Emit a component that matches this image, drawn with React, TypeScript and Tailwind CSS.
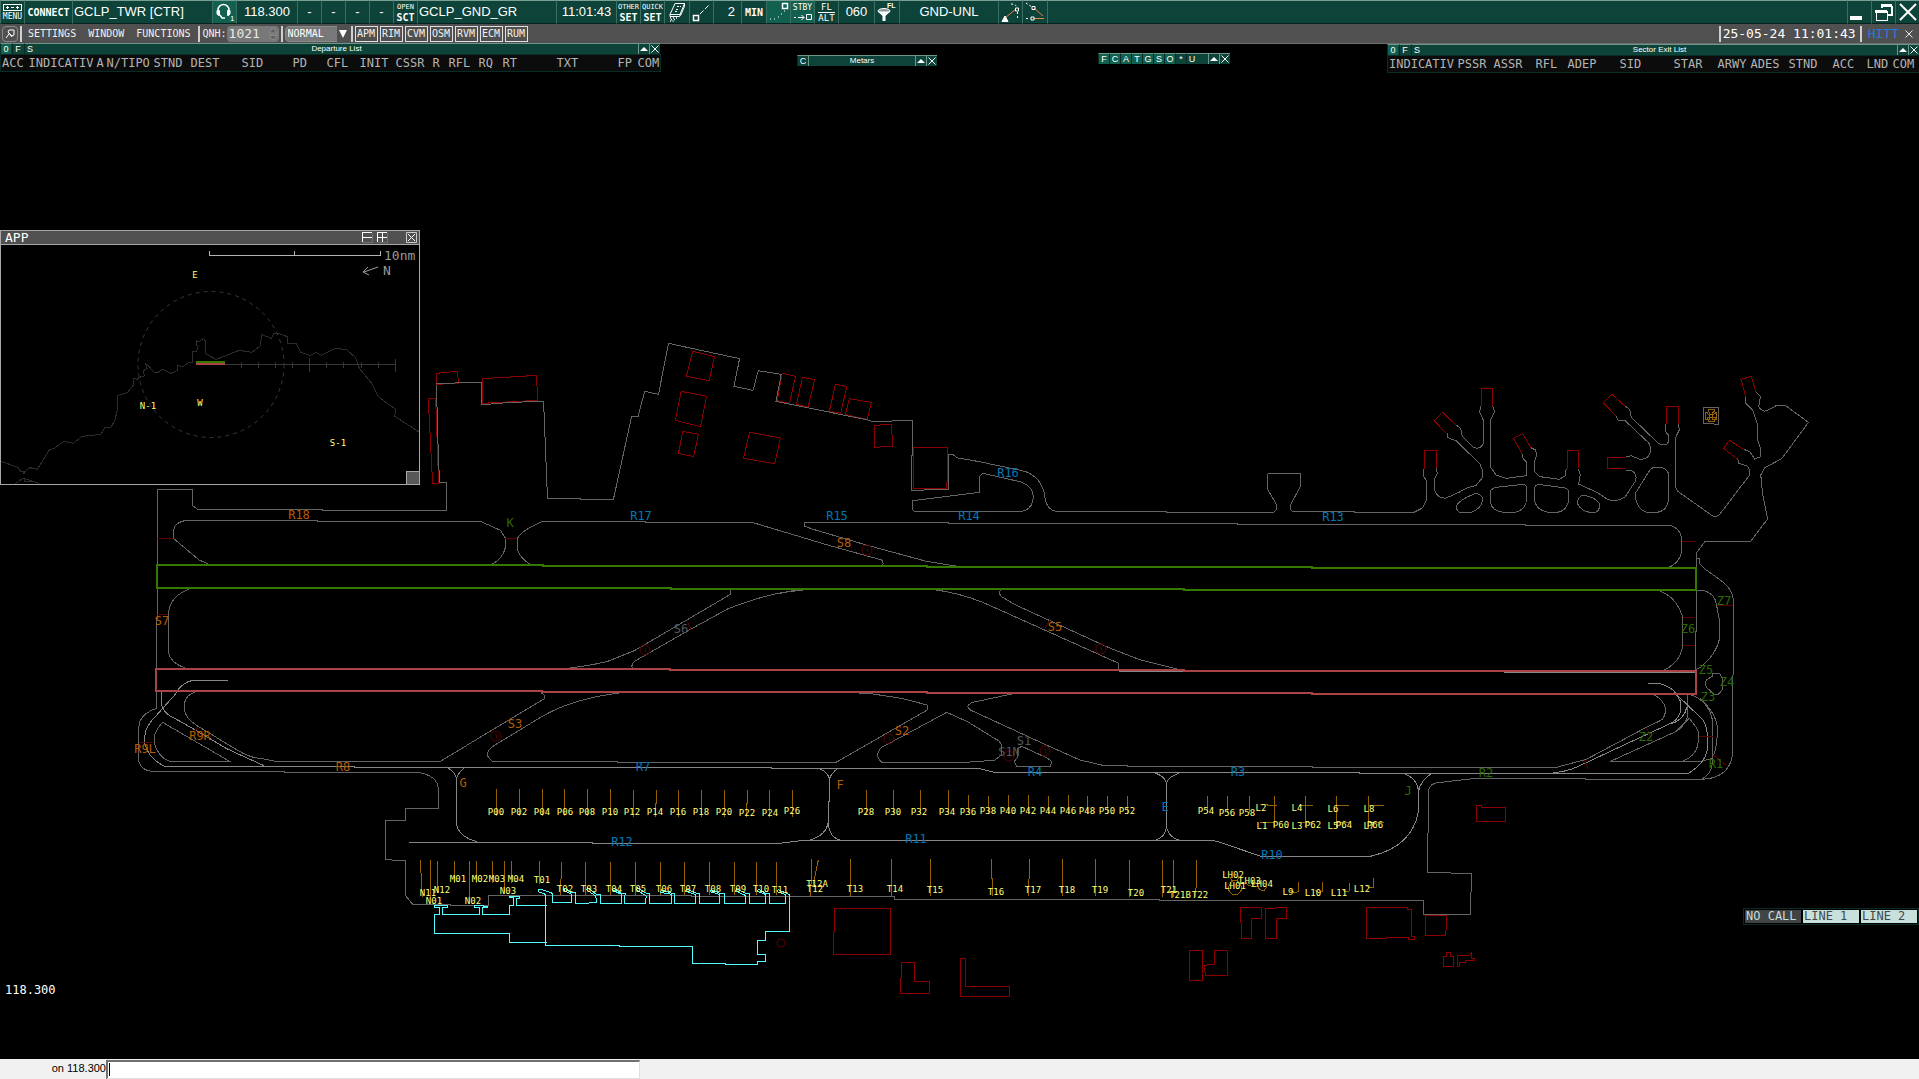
import { ReactNode } from 'react';
import clsx from 'clsx';

const MONO = "font-['DejaVu_Sans_Mono','Liberation_Mono',monospace]";
const SANS = "font-['Liberation_Sans',Arial,sans-serif]";

/* ---------- top bar ---------- */

interface CellProps {
  className?: string;
  active?: boolean;
  label?: string;
  children?: ReactNode;
}

function Cell({ className = '', active, label, children }: CellProps) {
  return (
    <button
      type="button"
      aria-label={label}
      className={clsx(
        'h-6 shrink-0 flex items-center border-t border-l border-b border-t-[#7aa093] border-l-[#3c6f63] border-b-[#06221d] whitespace-nowrap text-white',
        active ? 'bg-[#126150]' : 'bg-[#0d4339]',
        className
      )}
    >
      {children}
    </button>
  );
}

function Stacked({ top, bottom }: { top: string; bottom: string }) {
  return (
    <span className={`${MONO} flex flex-col items-center w-full`}>
      <span className="text-[7px] leading-[10px]">{top}</span>
      <span className="text-[10px] leading-[11px] font-bold">{bottom}</span>
    </span>
  );
}

function TopBar() {
  return (
    <header className={`flex h-6 shrink-0 overflow-hidden bg-[#0d4339] text-[13px] ${SANS}`}>
      <Cell className="w-6 justify-center">
        <span className={`${MONO} flex flex-col items-center text-[8px] leading-[9px]`}>
          <svg className="w-5 h-2" viewBox="0 0 20 8" shapeRendering="crispEdges" fill="none" stroke="#fff">
            <path d="M.5 .5h18v6h-18zM3 3.500h3M8 3.500h3M13 3.500h3M4.500 2v3M14.500 2v3" />
          </svg>
          MENU
        </span>
      </Cell>
      <Cell className="w-12 justify-center">
        <span className={`${MONO} text-[10px] font-bold`}>CONNECT</span>
      </Cell>
      <Cell className="w-[140px] pl-px">GCLP_TWR [CTR]</Cell>
      <Cell className="w-6 justify-center" active label="Headset 1">
        <svg className="w-5 h-5" viewBox="0 0 20 20" fill="none" stroke="#fff" strokeWidth="1.500">
          <path d="M3 10V8a5.500 5.500 0 0 1 11 0v2" />
          <path d="M2 8.500h2.500v5H3.500L2 12zM12.500 8.500H15V12l-1.500 1.500h-1z" fill="#fff" strokeWidth="1" />
          <path d="M5 13l2 3h3" />
          <text x="15" y="19" fontSize="8" fill="#fff" stroke="none">1</text>
        </svg>
      </Cell>
      <Cell className="w-[61px] justify-center">118.300</Cell>
      {['a', 'b', 'c', 'd'].map((id) => (
        <Cell key={id} className="w-6 justify-center">-</Cell>
      ))}
      <Cell className="w-6"><Stacked top="OPEN" bottom="SCT" /></Cell>
      <Cell className="w-[139px] pl-px">GCLP_GND_GR</Cell>
      <Cell className="w-[60px] justify-center">11:01:43</Cell>
      <Cell className="w-6"><Stacked top="OTHER" bottom="SET" /></Cell>
      <Cell className="w-6"><Stacked top="QUICK" bottom="SET" /></Cell>
      <Cell className="w-[25px] justify-center" label="Erase trails">
        <svg className="w-5 h-5" viewBox="0 0 20 20" fill="none" stroke="#fff">
          <path d="M8 1.500L17.500 1.500L13 12.500L3 12.500zM3 12.500v2h9.500l1-2M17.500 1.500v3l-4 9" />
          <path d="M10 4.500h2M9 7.500h2M8 9.500h2M13 4.500h1" />
          <path d="M3 16h1M6 16h1M9 16h1M4 17.500h1M7 17.500h1M3 19h1M5.500 19h1" strokeWidth="1.500" />
        </svg>
      </Cell>
      <Cell className="w-6 justify-center" label="Leader line">
        <svg className="w-5 h-5" viewBox="0 0 20 20" fill="none" stroke="#fff">
          <path d="M1.500 13.500h5v5h-5z" strokeWidth="1.500" />
          <path d="M8 12L18 2" strokeDasharray="5 2" />
        </svg>
      </Cell>
      <Cell className="w-7 justify-end pr-1.5">2</Cell>
      <Cell className="w-[25px] justify-center">
        <span className={`${MONO} text-[10px] font-bold`}>MIN</span>
      </Cell>
      <Cell className="w-6 justify-center" active label="History dots">
        <svg className="w-5 h-5" viewBox="0 0 20 20" fill="none" stroke="#fff">
          <path d="M13.500 1.500h5v5h-5z" strokeWidth="1.500" />
          <path d="M1 17h1M5 17h1M9 15h1M12 12h1M15 9h1" />
        </svg>
      </Cell>
      <Cell className="w-6" active>
        <span className={`${MONO} flex flex-col items-center w-full`}>
          <span className="text-[8px] leading-[11px]">STBY</span>
          <svg className="w-5 h-[9px]" viewBox="0 0 20 9" fill="none" stroke="#fff">
            <path d="M1 4.500h2M5 4.500h6M8.500 2L11 4.500L8.500 7M13.500 1.500h5v5h-5z" />
          </svg>
        </span>
      </Cell>
      <Cell className="w-6 justify-center">
        <span className={`${MONO} flex flex-col items-center text-[9px] leading-[10px]`}>
          <span className="w-full border-b border-white">FL</span>
          <span>ALT</span>
        </span>
      </Cell>
      <Cell className="w-9 justify-center">060</Cell>
      <Cell className="w-[25px] justify-center" label="Level filter">
        <svg className="w-5 h-5" viewBox="0 0 20 20">
          <ellipse cx="7" cy="9" rx="6" ry="2.500" fill="#8a9a96" stroke="#fff" />
          <path d="M1 9.500L5.500 14v5h3v-5L13 9.500z" fill="#fff" />
          <text x="10" y="6" fontSize="7" fontWeight="bold" fill="#fff">FL</text>
        </svg>
      </Cell>
      <Cell className="w-[99px] justify-center">GND-UNL</Cell>
      <Cell className="w-6 justify-center" label="Track vector">
        <svg className="w-5 h-5" viewBox="0 0 20 20" fill="none" stroke="#fff">
          <path d="M4 16L15 7" stroke="#e8834a" />
          <path d="M1 19.500L4 14L7 19.500z" fill="#fff" />
          <path d="M14.500 6h3v3h-3z" />
          <path d="M10 2Q15 2 16.500 6M16.500 10v8" strokeDasharray="2 2" />
        </svg>
      </Cell>
      <Cell className="w-[25px] justify-center" label="Conflict probe">
        <svg className="w-5 h-5" viewBox="0 0 20 20" fill="none" stroke="#fff">
          <path d="M9 6L18 14M9 16.500h10" stroke="#e8834a" />
          <path d="M7 4.500h3v3h-3zM6 15h3v3h-3z" />
          <path d="M1 1l6 4M1 16.500h4" strokeDasharray="2 2" />
        </svg>
      </Cell>
      <div className="h-6 grow border-t border-l border-b border-t-[#7aa093] border-l-[#3c6f63] border-b-[#06221d]" />
      <Cell className="w-6 pl-0.5" label="Minimize">
        <span className="w-3 h-1 mt-3 bg-white" />
      </Cell>
      <Cell className="w-6 justify-center" label="Restore">
        <svg className="w-5 h-5" viewBox="0 0 20 20" fill="none" stroke="#fff" shapeRendering="crispEdges">
          <path d="M2 9v9h11V9z" strokeWidth="1" />
          <path d="M1 9h12M7 3.500h11" strokeWidth="3" />
          <path d="M8 4v2M17.500 4v9H14" strokeWidth="2" />
        </svg>
      </Cell>
      <Cell className="w-6 justify-center" label="Close">
        <svg className="w-5 h-5" viewBox="0 0 20 20" stroke="#fff" strokeWidth="2">
          <path d="M2 2L18 18M18 2L2 18" />
        </svg>
      </Cell>
    </header>
  );
}

/* ---------- grey tool bar ---------- */

function Bar() {
  return <span className="w-0.5 h-4 shrink-0 bg-[#d0d0d0]" />;
}

const alertToggles = ['APM', 'RIM', 'CVM', 'OSM', 'RVM', 'ECM', 'RUM'];

function ToolBar() {
  return (
    <div className={`flex items-center h-5 shrink-0 bg-[#505050] border-b border-[#6e6e6e] text-[10px] text-[#f0f0f0] ${MONO}`}>
      <button type="button" aria-label="Pin" className="ml-0.5 w-4 h-4 shrink-0 flex items-center justify-center border border-[#8a8a8a] rounded-sm">
        <svg className="w-3 h-3" viewBox="0 0 12 12" fill="none" stroke="#fff">
          <path d="M5 2l5 0v5l-2 1l-4-4zM5 6L2 10M4 4l4 5" />
        </svg>
      </button>
      <span className="w-0.5" />
      <Bar />
      <nav className="flex gap-3 pl-1.5 pr-2">
        <button type="button">SETTINGS</button>
        <button type="button">WINDOW</button>
        <button type="button">FUNCTIONS</button>
      </nav>
      <Bar />
      <label htmlFor="qnh" className="pl-0.5">QNH:</label>
      <div className="relative flex items-center w-[52px] h-4 mr-0.5 shrink-0">
        <input id="qnh" defaultValue="1021" className="w-full h-4 pl-0.5 rounded-sm bg-[#787878] text-[13px] leading-4 text-[#e8e8e8]" />
        <svg className="absolute right-0 w-3 h-4" viewBox="0 0 12 16" fill="#606060" stroke="#8c8c8c">
          <path d="M2 7L6 2L10 7zM2 9.500L6 14L10 9.500z" />
        </svg>
      </div>
      <Bar />
      <div className="relative flex items-center w-16 h-4 mx-0.5 shrink-0">
        <select aria-label="Mode" className="appearance-none w-full h-4 pl-0.5 rounded-sm border border-[#8a8a8a] bg-[#787878] text-[10px] leading-3 text-white">
          <option>NORMAL</option>
        </select>
        <svg className="absolute right-0 w-3 h-4 bg-[#505050] pointer-events-none" viewBox="0 0 12 16" fill="#fff">
          <path d="M2 4h8L6 12z" />
        </svg>
      </div>
      <Bar />
      <div className="flex gap-0.5 pl-0.5">
        {alertToggles.map((t) => (
          <button key={t} type="button" className="w-[23px] h-4 leading-[14px] border border-[#e0e0e0]">
            {t}
          </button>
        ))}
      </div>
      <div className="grow" />
      <Bar />
      <time className="pl-0.5 pr-1 text-[13px] leading-4 whitespace-nowrap text-white">25-05-24 11:01:43</time>
      <Bar />
      <span className="pl-1.5 text-[13px] leading-4 text-[#2278e6]">HITT</span>
      <button type="button" aria-label="Close bar" className="px-1.5">
        <svg className="w-2 h-2" viewBox="0 0 8 8" stroke="#e8e8e8">
          <path d="M.5 .5l7 7M7.500 .5l-7 7" />
        </svg>
      </button>
    </div>
  );
}

/* ---------- floating lists ---------- */

function TinyButton({ active, children }: { active?: boolean; children: ReactNode }) {
  return (
    <button
      type="button"
      className={clsx(
        'w-[11px] h-[11px] shrink-0 flex items-center justify-center border-t border-l border-t-[#6f968a] border-l-[#0a2c26] text-[9px] leading-[10px] text-white',
        active ? 'bg-[#126150]' : 'bg-[#0d4339]'
      )}
    >
      {children}
    </button>
  );
}

function WindowButtons() {
  return (
    <>
      <button type="button" aria-label="Roll up" className="w-[11px] h-[11px] shrink-0 flex items-center justify-center border-t border-l border-[#6f968a] bg-[#0d4339]">
        <svg className="w-2 h-2" viewBox="0 0 8 8" fill="#fff"><path d="M0 6h8L4 2z" /></svg>
      </button>
      <button type="button" aria-label="Close" className="w-[11px] h-[11px] shrink-0 flex items-center justify-center border-t border-l border-[#6f968a] bg-[#0d4339]">
        <svg className="w-2 h-2" viewBox="0 0 8 8" stroke="#fff"><path d="M.5 .5l7 7M7.500 .5l-7 7" /></svg>
      </button>
    </>
  );
}

interface Column {
  name: string;
  width: string;
}

const departureColumns: Column[] = [
  { name: 'ACC', width: 'w-[27px]' },
  { name: 'INDICATIV', width: 'w-[68px]' },
  { name: 'A', width: 'w-[10px]' },
  { name: 'N/TIPO', width: 'w-[47px]' },
  { name: 'STND', width: 'w-[37px]' },
  { name: 'DEST', width: 'w-[51px]' },
  { name: 'SID', width: 'w-[51px]' },
  { name: 'PD', width: 'w-[34px]' },
  { name: 'CFL', width: 'w-[33px]' },
  { name: 'INIT', width: 'w-[36px]' },
  { name: 'CSSR', width: 'w-[37px]' },
  { name: 'R', width: 'w-[16px]' },
  { name: 'RFL', width: 'w-[30px]' },
  { name: 'RQ', width: 'w-[24px]' },
  { name: 'RT', width: 'w-[54px]' },
  { name: 'TXT', width: 'w-[61px]' },
  { name: 'FP', width: 'w-[20px]' },
  { name: 'COM', width: 'w-[24px]' },
];

const exitColumns: Column[] = [
  { name: 'INDICATIV', width: 'w-[69px]' },
  { name: 'PSSR', width: 'w-[36px]' },
  { name: 'ASSR', width: 'w-[42px]' },
  { name: 'RFL', width: 'w-[32px]' },
  { name: 'ADEP', width: 'w-[52px]' },
  { name: 'SID', width: 'w-[54px]' },
  { name: 'STAR', width: 'w-[44px]' },
  { name: 'ARWY', width: 'w-[33px]' },
  { name: 'ADES', width: 'w-[38px]' },
  { name: 'STND', width: 'w-[44px]' },
  { name: 'ACC', width: 'w-[34px]' },
  { name: 'LND', width: 'w-[26px]' },
  { name: 'COM', width: 'w-[28px]' },
];

function FlightList({ title, columns, className }: { title: string; columns: Column[]; className: string }) {
  return (
    <section className={clsx('absolute', className)}>
      <div className={`flex h-[11px] bg-[#0d4339] border-t border-[#6f968a] ${SANS}`}>
        <div className="flex gap-px -mt-px">
          <TinyButton active>0</TinyButton>
          <TinyButton>F</TinyButton>
          <TinyButton>S</TinyButton>
        </div>
        <h2 className="grow text-center text-[8px] leading-[10px] text-white">{title}</h2>
        <div className="flex -mt-px">
          <WindowButtons />
        </div>
      </div>
      <table className={`table-fixed w-full border border-[#0a2c26] bg-[#0c0c0c] text-[12px] text-[#b4b4b4] ${MONO}`}>
        <thead>
          <tr>
            {columns.map((c) => (
              <th key={c.name} className={clsx(c.width, 'h-4 p-0 pl-px text-left font-normal leading-4 whitespace-nowrap')}>
                {c.name}
              </th>
            ))}
          </tr>
        </thead>
      </table>
    </section>
  );
}

/* ---------- ground map ---------- */

// The ground layout is digitised in several sheets, each with its own origin and scale.
interface Sheet {
  x: number;
  y: number;
  kx: number;
  taxi?: string;
  centre?: string;
  building?: string;
  stopBar?: string;
  stand?: string;
  terminal?: string;
}

const sheets: Sheet[] = [
  {
    // west end, R18 down to R8
    x: 130, y: 460, kx: 2.24,
    taxi:
      'M61 313V88H140V137L153 149H432V151H709V67M122 182H419V184H785L830 211L841 235V262Q835 300 805 316M122 182Q98 190 98 210V236L155 300L180 315' +
      'M908 316L893 311Q868 285 867 262V240Q870 215 925 184H1154V187H1393L1568 257M139 384Q90 405 86 460V575Q90 610 128 626M61 384V475H59V625' +
      'M1345 388V403L1130 572L1070 604Q1030 618 960 628M1530 386L1460 398Q1410 410 1340 446L1250 512L1135 600Q1120 612 1126 626' +
      'M59 692V745L48 751Q20 770 20 800V905Q25 930 48 934H345V937H560M73 787Q55 815 55 830V850Q62 890 88 904H223Z' +
      'M150 694Q122 705 122 735V750Q125 775 150 797L240 870Q270 895 300 897L327 904H695L928 716V705L920 697' +
      'M1156 697H1107Q990 715 920 772L815 857Q795 875 803 893L812 905H1093V907H1456',
    centre: 'M220 661H140Q115 668 100 705L60 765Q33 800 33 830V850Q40 895 78 919H503V922H1436V925H1456M71 695V735Q75 760 100 775L140 805L215 865L300 917',
    stopBar: 'M61 235H97M841 235H866M61 463H84M20 848H50M153 800L145 815M1249 485L1257 510',
  },
  {
    // main apron and terminal
    x: 380, y: 740, kx: 3,
    taxi: 'M0 97H110Q175 105 175 150V206H77V241H17V358L47 361H77V467L97 492H212V496H325V466H935V469H1500',
    centre:
      'M205 84Q228 100 229 115V250Q235 290 290 305M253 84Q235 98 229 115M87 307H636V310H1197L1240 305L1268 301H1320' +
      'M1320 86Q1345 98 1348 117V185H1345V245Q1340 285 1290 300M1373 86Q1355 98 1348 117M1345 245Q1345 290 1380 300',
    stand:
      'M349 147V228M418 147V228M487 147V228M553 147V228M622 147V228M691 147V228M760 150V230M829 150V190L826 192V230M895 150V230M964 150V230M1033 150V230M1102 150V190L1099 192V230M1168 150V230M1237 150V230M1459 150V225' +
      'M121 360L127 470M151 360V470M172 363V460M223 363V428M268 363V492M289 363V428M337 363V428M373 363V460M394 363V428M478 363V433M544 366V415L541 420V466M616 366V466M691 366V466M766 366V466M841 366V466M913 366V466M988 366V466M1063 366V466M1129 366V466M1189 366V466M1294 357V430L1291 435V467M1315 360L1298 440M1411 357V467',
    terminal:
      'M163 497V502H179V523H163V580H388V607H500M163 497H202V502H187V523H298V502H283V497H310V499H323V502H307V523H388V496H400V473H388V469H418V475H409V496H500' +
      'M496 463V616H717V619H937V670H1035V673H1132V664H1156V643H1132V601H1156V574H1228V464L1205 452' +
      'M496 463L475 455V449L482 447L517 460V487H574V463L550 450L556 445L574 458H586V490H617L650 487L647 468L619 449L623 443L649 463H661V490H724V463L697 450L700 444L725 460H736L733 475V490H796L799 468L770 450L773 443L799 460H808V490H874V463L841 457L845 450L875 460H883V490H946V463L916 454L919 447L950 460H958V490H1018V463L990 455L994 449L1020 460H1033V490H1096V466L1066 453L1070 447L1096 460H1108V490H1156V463L1132 454L1135 448L1158 460H1168V490H1216V463L1192 455L1195 449L1228 464',
  },
  {
    // centre field, R15/R14 down to R4/R3
    x: 780, y: 470, kx: 2.8,
    taxi:
      'M773 124H1081V127H1383L1391 118V105L1365 58V15L1368 10H1457V50L1430 103V118L1435 125H1568M371 92L558 67V20L568 10L676 36Q709 50 709 80Q709 118 676 124H376L371 118Z' +
      'M68 158H473V160H1280V163H1568M68 158V168L90 177L245 226L410 274L503 290M140 227L285 270L289 280L284 289M0 370L45 360L95 355' +
      'M425 358Q500 368 570 398L745 482L948 580V600M621 358Q608 365 620 380L660 405L925 535L1010 570L1130 602' +
      'M0 877H157L412 720V705L340 685L260 672L197 667M467 727L285 832Q262 855 285 877H518L600 871L620 855V825Q615 812 605 808L525 755Z' +
      'M677 667L640 674L540 697Q515 708 535 721L760 832L840 870L900 885H973V889H1491V892H1568M677 829L665 836L666 860L656 875L663 889H757L761 875L750 865Z',
    centre: 'M950 604H1130M0 895H556L600 907H1568',
    stopBar: 'M755 450L743 475',
  },
  {
    // east apron
    x: 820, y: 750, kx: 2.306,
    taxi: 'M1199 52H1568M138 439H172V448H782V451H1391V493H1500V430L1502 425V370L1453 369V367H1401V255L1403 245V120Q1408 100 1425 98L1505 86H1568',
    centre:
      'M1199 68H1245V70H1568M772 68Q795 80 799 98V232Q795 262 775 270M827 70Q805 80 799 98M799 232Q805 262 827 270M0 271H905L920 276L1015 318H1272Q1365 290 1380 185V125Q1378 85 1345 70M1411 70Q1385 90 1380 125',
    building:
      'M33 475H163V613H31V543H33ZM188 637H217V694H252V730H185V685H188ZM324 625H336V709H437V740H324ZM852 601H882V691H852ZM910 601H940V676H889L886 648L897 643H910Z' +
      'M969 472H1018V505H995V566H972V520L969 515ZM1027 475H1050V472H1076V505H1053V566H1027ZM1260 472H1355V478H1364V560H1371V568H1357V562H1307V565H1260Z' +
      'M1396 496H1445V525L1442 556H1396ZM1438 619H1444V607H1453V619H1461V649H1438ZM1470 649V616H1498L1502 609V625H1509V631H1488V637H1475V649Z',
    stand:
      'M107 120V190M169 120V190M232 120V190M296 120V190M342 135V190M388 137V192M435 135V192M481 135V192M527 137V192M573 135V192M617 137V192M663 137V192M709 137V192M893 138V190M939 138V190M990 138V190' +
      'M1048 138V230M1015 164H1032M1030 166H1053M1015 217H1048M1119 138V230M1105 166H1137M1105 217H1137M1190 138V230M1190 166H1219M1190 217H1219M1265 138V230M1265 166H1300M1265 217H1300' +
      'M70 327V437M165 327V437M255 327V437M396 327V385L398 388V437M483 327V385L481 388V437M559 327V437M635 327V437M714 330V440M790 330V440M815 330V440M868 330V390L866 440' +
      'M942 412Q942 432 957 434Q972 432 972 412Q968 392 957 390Q946 392 942 412M945 380L950 392H962L966 380M982 395Q984 410 998 408L1005 398M1010 408Q1012 422 1024 422L1030 410' +
      'M1103 397V425L1094 428L1085 420M1159 397V425L1150 428L1142 420M1221 399V423L1212 425L1204 418M1276 385V412L1265 413L1258 404',
  },
  {
    // north east pads
    x: 1300, y: 360, kx: 2.958,
    taxi:
      'M118 454H160V457H337L362 444L375 420V363L365 348V328M403 325L406 340L397 360V385Q400 412 430 415L470 397L495 383L520 377L538 355Q545 335 532 312L463 243L435 232V220' +
      'M460 194L475 205L480 228L510 260Q530 272 542 252V180L531 155L535 138M570 137L576 155L564 180V322L580 345L610 355L671 347V307L657 292V282' +
      'M683 263L697 270L700 285L694 305V335L710 350L767 358L784 348L787 330L790 328M824 328L829 345L824 372L880 398L910 418Q940 428 962 410L993 362Q998 340 980 331H964' +
      'M964 291L980 287L1005 298Q1035 300 1037 268Q1037 250 1022 240L963 183L940 180L935 168M960 137L975 148L980 172L1060 250Q1085 262 1090 245V225L1081 215V193' +
      'M1120 193L1122 210L1113 228L1110 240V378L1116 393L1225 471L1240 465L1330 345Q1332 325 1322 318L1298 310L1295 298M1313 268L1330 275L1345 297L1362 290V265L1354 240V195L1340 152L1319 130V110' +
      'M1349 97L1362 110L1357 140Q1368 160 1385 150L1410 136H1435L1504 187L1425 296L1375 323L1363 345L1368 400L1383 477L1333 544H1198L1174 577V600' +
      'M517 401Q470 420 463 437Q462 458 480 458H505Q540 445 540 415Q535 400 517 401ZM660 373L580 382Q563 388 563 395V425Q568 457 610 457H635Q668 450 671 415V385Q670 375 660 373' +
      'M705 373L785 384Q795 388 795 400V420Q788 457 755 457H735Q697 450 694 420V385Q697 374 705 373M835 406Q820 412 821 432Q835 458 870 458Q887 455 887 432Q870 408 835 406' +
      'M1045 322H1070Q1090 330 1090 345V420Q1085 457 1050 457H1025Q992 445 992 400L1035 330ZM118 493H237M1193 142H1239V193L1193 190Z',
    building:
      'M368 327V273L404 270V323M433 220L397 182L422 157L460 194M536 138V85H570V137M657 281L631 235L659 221L683 263M790 328V271H824V325M964 291H909V325H964' +
      'M935 168L897 128L922 103L960 137M1084 193V139H1120V192M1319 110L1304 58L1335 49L1349 97M1295 298L1253 265L1270 241L1313 269',
    stopBar: 'M1129 544H1172',
    stand:
      'M1208 148H1226V155L1221 157V163L1228 161V157H1233V178H1228V172H1221V178L1226 180V184H1208V180L1212 178V172H1204V178H1199V157H1204V161L1212 163V157L1208 155ZM1212 163H1221V172H1212Z',
  },
  {
    // east end, Z taxiways
    x: 1380, y: 500, kx: 2.909,
    taxi:
      'M0 73H422V76H843Q877 85 878 125V155Q872 190 833 206M920 204V160M920 175H929V190L945 207L990 240Q1025 265 1028 300V520L1026 530V760Q1018 835 935 838H597V835H349' +
      'M805 270Q860 285 880 350V437Q875 490 815 516M920 270V395H917V510M920 271H940Q975 280 979 315L988 365V415Q980 460 935 500L920 508' +
      'M967 520H988L995 535V570L985 582H970L950 562Q942 550 950 540L967 528ZM895 586V650Q885 680 860 695L670 784H935L967 775M860 695L900 655L925 690L926 720Q925 765 880 784' +
      'M797 584Q825 600 831 625Q830 655 815 662L775 682L600 778L520 800L515 802H349M900 583Q955 600 967 660V775Q970 820 935 838M930 595Q980 640 982 690Q980 740 970 768',
    centre:
      'M361 517H917M780 550H810Q850 560 862 583L875 605V630Q870 655 850 668L720 730L575 800Q540 816 503 818M862 583L940 660Q952 680 952 710V750Q945 790 897 820H349M893 620Q885 660 845 672',
    stopBar: 'M879 124H918M880 352H916M880 436H916M980 316H1026M928 709H968M970 765L1008 797M775 683L792 722M592 778L607 808',
    building: 'M280 916H296V922H366V965H280Z',
  },
  {
    // military apron, north side
    x: 420, y: 330, kx: 2.306,
    taxi:
      'M38 165L41 325L45 458H61M38 160H63L115 157H142V223L165 222L210 217L285 214L294 505H370V508H446L488 259H503L518 184L550 193L573 40L737 86L724 169L768 181L780 122L833 133L821 214L1033 270L1047 276L1115 271H1136V375H1133V481L1219 478V373H1228L1240 384L1290 395L1395 424Q1430 440 1440 490Q1442 540 1468 544',
    building:
      'M37 130L86 124L89 160L37 163ZM19 205H36L43 460H29ZM144 146L269 136L271 211L144 220ZM629 64L679 80L667 152L614 139ZM602 184L661 199L647 290L589 271Z' +
      'M606 304L642 313L631 380L596 370ZM760 307L831 324L818 401L746 385ZM835 130L866 139L852 220L824 212ZM882 142L910 149L895 232L868 223Z' +
      'M958 163L984 170L970 250L944 244ZM990 206L1041 217L1031 268L981 254ZM1048 286L1087 283L1090 349L1048 352ZM1138 352H1217L1215 475H1138Z',
  },
];

const noEntry: [number, number][] = [
  [645, 650], [496, 736], [867, 550], [1101, 649], [889, 739], [1009, 756], [1045, 751],
];

type Label = [string, number, number];

const taxiLabels: { fill: string; items: Label[] }[] = [
  {
    fill: 'fill-[#b85c00]',
    items: [
      ['R18', 299, 515], ['S8', 844, 543], ['S5', 1055, 627], ['S7', 162, 621], ['S3', 515, 724], ['S2', 902, 731],
      ['R9R', 200, 736], ['R9L', 145, 749], ['R8', 343, 767], ['G', 463, 783], ['F', 840, 785],
    ],
  },
  {
    fill: 'fill-[#0078b8]',
    items: [
      ['R17', 641, 516], ['R15', 837, 516], ['R14', 969, 516], ['R16', 1008, 473], ['R13', 1333, 517], ['R7', 643, 767],
      ['R12', 622, 842], ['R4', 1035, 772], ['R3', 1238, 772], ['E', 1165, 807], ['R11', 916, 839], ['R10', 1272, 855],
    ],
  },
  {
    fill: 'fill-[#2a6a00]',
    items: [
      ['K', 510, 523], ['Z7', 1724, 601], ['Z6', 1688, 629], ['Z5', 1706, 670], ['Z4', 1727, 682], ['Z3', 1708, 697],
      ['Z2', 1646, 737], ['R1', 1716, 764], ['R2', 1486, 773], ['J', 1408, 791],
    ],
  },
  {
    fill: 'fill-[#505860]',
    items: [['S6', 681, 629], ['S1', 1024, 741], ['S1N', 1009, 752]],
  },
];

const standLabels: Label[] = [
  ['P00', 496, 812], ['P02', 519, 812], ['P04', 542, 812], ['P06', 565, 812], ['P08', 587, 812], ['P10', 610, 812],
  ['P12', 632, 812], ['P14', 655, 812], ['P16', 678, 812], ['P18', 701, 812], ['P20', 724, 812], ['P22', 747, 813],
  ['P24', 770, 813], ['P26', 792, 811], ['P28', 866, 812], ['P30', 893, 812], ['P32', 919, 812], ['P34', 947, 812],
  ['P36', 968, 812], ['P38', 988, 811], ['P40', 1008, 811], ['P42', 1028, 811], ['P44', 1048, 811], ['P46', 1068, 811],
  ['P48', 1087, 811], ['P50', 1107, 811], ['P52', 1127, 811], ['P54', 1206, 811], ['P56', 1227, 813], ['P58', 1247, 813],
  ['L2', 1261, 808], ['L4', 1297, 808], ['L6', 1333, 809], ['L8', 1369, 809], ['L1', 1262, 826], ['P60', 1281, 825],
  ['L3', 1297, 826], ['P62', 1313, 825], ['L5', 1333, 826], ['P64', 1344, 825], ['L7', 1369, 826], ['P66', 1375, 825],
  ['M01', 458, 879], ['M02', 480, 879], ['M03', 497, 879], ['M04', 516, 879], ['N11', 428, 893], ['N12', 442, 890],
  ['N03', 508, 891], ['N02', 473, 901], ['N01', 434, 901],
  ['T01', 542, 880], ['T02', 565, 889], ['T03', 589, 889], ['T04', 614, 889], ['T05', 638, 889], ['T06', 664, 889],
  ['T07', 688, 889], ['T08', 713, 889], ['T09', 738, 889], ['T10', 761, 889], ['T11', 780, 890], ['T12A', 817, 884],
  ['T12', 815, 889], ['T13', 855, 889], ['T14', 895, 889], ['T15', 935, 890], ['T16', 996, 892], ['T17', 1033, 890],
  ['T18', 1067, 890], ['T19', 1100, 890], ['T20', 1136, 893], ['T21', 1169, 890], ['T21B', 1180, 895], ['T22', 1200, 895],
  ['LH02', 1233, 875], ['LH01', 1235, 886], ['LH03', 1250, 881], ['LH04', 1262, 884],
  ['L9', 1288, 892], ['L10', 1313, 893], ['L11', 1339, 893], ['L12', 1362, 889],
];

function GroundMap() {
  return (
    <svg
      className={`absolute inset-0 w-full h-full [&_path]:[vector-effect:non-scaling-stroke] ${MONO}`}
      viewBox="0 44 1919 1015"
      fill="none"
    >
      <g shapeRendering="crispEdges">
        {sheets.map((s) => (
          <g key={`${s.x}-${s.y}`} transform={`translate(${s.x} ${s.y}) scale(${1 / s.kx} ${1 / 3})`}>
            <path d={s.building} stroke="#8a0000" />
            <path d={s.taxi} stroke="#646464" />
            <path d={s.centre} stroke="#868686" />
            <path d={s.stopBar} stroke="#5c0000" />
            <path d={s.stand} stroke="#946000" />
            <path d={s.terminal} stroke="#50ffff" />
          </g>
        ))}
        <path d="M157 565H543V566H927V567H1312V568H1696V590H1184V589H671V588H157Z" stroke="#347a00" strokeWidth="2" />
        <path d="M156 669H670V670H1184V671H1696V694H1312V693H927V692H542V691H156Z" stroke="#a84444" strokeWidth="2" />
      </g>
      <g stroke="#5c0000">
        {noEntry.map(([x, y]) => (
          <g key={x}>
            <circle cx={x} cy={y} r="5" />
            <path d={`M${x} ${y - 2}l1 4`} />
          </g>
        ))}
        <circle cx="781" cy="943" r="4" />
      </g>
      {taxiLabels.map((group) => (
        <g key={group.fill} className={clsx(group.fill, 'text-[12px]')} textAnchor="middle">
          {group.items.map(([text, x, y]) => (
            <text key={text} x={x} y={y + 4}>{text}</text>
          ))}
        </g>
      ))}
      <g className="fill-[#ffff78] text-[9px]" textAnchor="middle">
        {standLabels.map(([text, x, y]) => (
          <text key={text} x={x} y={y + 3}>{text}</text>
        ))}
      </g>
    </svg>
  );
}

/* ---------- APP inset window ---------- */

function AppWindow() {
  return (
    <section className={`absolute left-0 top-[186px] w-[420px] border border-[#a8a8a8] bg-black ${MONO}`}>
      <div className="flex items-center h-[14px] pl-1 pr-0.5 bg-[#505050] border-b border-[#a8a8a8]">
        <h2 className="grow text-[13px] leading-[13px] text-white">APP</h2>
        <button type="button" aria-label="Smaller" className="mr-1">
          <svg className="w-[11px] h-[11px]" viewBox="0 0 11 11" shapeRendering="crispEdges" fill="none" stroke="#fff">
            <path d="M10.500 .5v10h-10" stroke="#707070" /><path d="M10 .5H.5V10M1 5.500h9" />
          </svg>
        </button>
        <button type="button" aria-label="Larger" className="mr-[18px]">
          <svg className="w-[11px] h-[11px]" viewBox="0 0 11 11" shapeRendering="crispEdges" fill="none" stroke="#fff">
            <path d="M10.500 .5v10h-10" stroke="#707070" /><path d="M10 .5H.5V10M1 5.500h9M5.500 1v9" />
          </svg>
        </button>
        <button type="button" aria-label="Close">
          <svg className="w-[11px] h-[11px]" viewBox="0 0 11 11" fill="none" stroke="#fff">
            <path d="M.5 .5h10v10h-10z" stroke="#ccc" /><path d="M2 2l7 7M9 2l-7 7" />
          </svg>
        </button>
      </div>
      <svg className="block w-full [&_path]:[vector-effect:non-scaling-stroke]" viewBox="1 20 418 239" fill="none">
        <g transform="scale(0.333333)" shapeRendering="crispEdges">
          <path
            stroke="#2c2c2c"
            d="M3 709L54 727L62 740H72L69 748M75 748V740L90 728L112 733L148 675L163 670L192 649L220 655L246 634L303 628L315 607H333L345 585L354 545V511L382 503L400 480V460L412 463L418 457L433 453L430 437L442 430L436 416L442 418L461 441L473 443L487 433L512 445L533 436L534 422L549 425L565 413L579 411V379H590L595 364L589 360V347L597 350L611 340L616 348V386L648 403L718 376L755 382L781 363L785 328L814 341L822 325H835L862 335V355H888L901 381L930 391L948 382L964 391L1006 370L1040 374L1066 397L1078 430L1115 475L1136 516L1187 553L1184 574L1256 620M46 776L70 759L118 775M72 762L75 770L100 771"
          />
          <path
            stroke="#363636"
            d="M675 418H1186M1186 402V440M724 410V430M775 410V430M826 410V430M877 410V430M928 400V440M979 410V430M1032 410V430M1084 410V430M1135 410V430"
          />
          <path d="M628 78V91H1141V78M883 78V91" stroke="#b4b4b4" />
          <path d="M588 411H675" stroke="#347a00" strokeWidth="2" />
          <path d="M588 416H675" stroke="#a84444" strokeWidth="2" />
        </g>
        <circle cx="211" cy="139.500" r="73" stroke="#3a3a3a" strokeDasharray="4 4" />
        <path d="M378 42L364 47M368 42L363 47L369 50" stroke="#a0a0a0" />
        <g className="fill-[#9a9a9a] text-[13px]">
          <text x="384" y="35">10nm</text>
          <text x="383" y="50">N</text>
        </g>
        <g className="fill-[#ffff78] text-[9px]" textAnchor="middle">
          <text x="195" y="53">E</text>
          <text x="200" y="181">W</text>
          <text x="148" y="184">N-1</text>
          <text x="338" y="221">S-1</text>
        </g>
      </svg>
      <span className="absolute right-0 bottom-0 w-[13px] h-[13px] bg-[#585858] border-t border-l border-[#a8a8a8]" />
    </section>
  );
}

const filterLetters = ['F', 'C', 'A', 'T', 'G', 'S', 'O'];

export default function App() {
  return (
    <div className="flex flex-col h-screen overflow-hidden bg-black">
      <TopBar />
      <ToolBar />
      <main className="relative grow">
        <GroundMap />

        <FlightList title="Departure List" columns={departureColumns} className="left-0 -top-px w-[660px]" />
        <FlightList title="Sector Exit List" columns={exitColumns} className="right-0 top-0 w-[532px]" />

        <section className={`absolute left-[797px] top-[11px] flex w-[140px] bg-[#0d4339] ${SANS}`}>
          <TinyButton>C</TinyButton>
          <h2 className="grow text-center text-[8px] leading-[10px] text-white border-t border-l border-[#6f968a]">Metars</h2>
          <WindowButtons />
        </section>

        <section className={`absolute left-[1098px] top-[9px] flex bg-[#0d4339] ${SANS}`}>
          {filterLetters.map((l) => (
            <TinyButton key={l} active>{l}</TinyButton>
          ))}
          <TinyButton>*</TinyButton>
          <TinyButton>U</TinyButton>
          <span className="w-[11px] border-t border-[#6f968a]" />
          <WindowButtons />
        </section>

        <AppWindow />

        <div className={`absolute right-0 bottom-[134px] flex gap-0.5 p-px border border-[#0a2c26] text-[12px] leading-[13px] ${MONO}`}>
          <button type="button" className="w-14 h-[13px] pl-px text-left bg-[#404444] text-[#c8dcd8]">NO CALL</button>
          <button type="button" className="w-14 h-[13px] pl-px text-left bg-[#c8e0dc] text-[#404848]">LINE 1</button>
          <button type="button" className="w-14 h-[13px] pl-px text-left bg-[#c8e0dc] text-[#404848]">LINE 2</button>
        </div>

        <p className={`absolute left-[5px] bottom-[61px] text-[12px] leading-4 text-white ${MONO}`}>118.300</p>
      </main>

      <footer className={`flex h-5 shrink-0 bg-[#f0f0f0] text-[11px] text-black ${SANS}`}>
        <label htmlFor="command" className="w-[106px] text-right leading-[18px]">on 118.300</label>
        <div className="relative">
          <input
            id="command"
            className="block w-[534px] h-[19px] mt-px pl-1 bg-white border-t-2 border-l-2 border-r border-b border-t-[#707070] border-l-[#707070] border-r-[#e0e0e0] border-b-[#e0e0e0] outline-none"
          />
          <span className="absolute left-[3px] top-1 w-px h-[13px] bg-black" />
        </div>
      </footer>
    </div>
  );
}
